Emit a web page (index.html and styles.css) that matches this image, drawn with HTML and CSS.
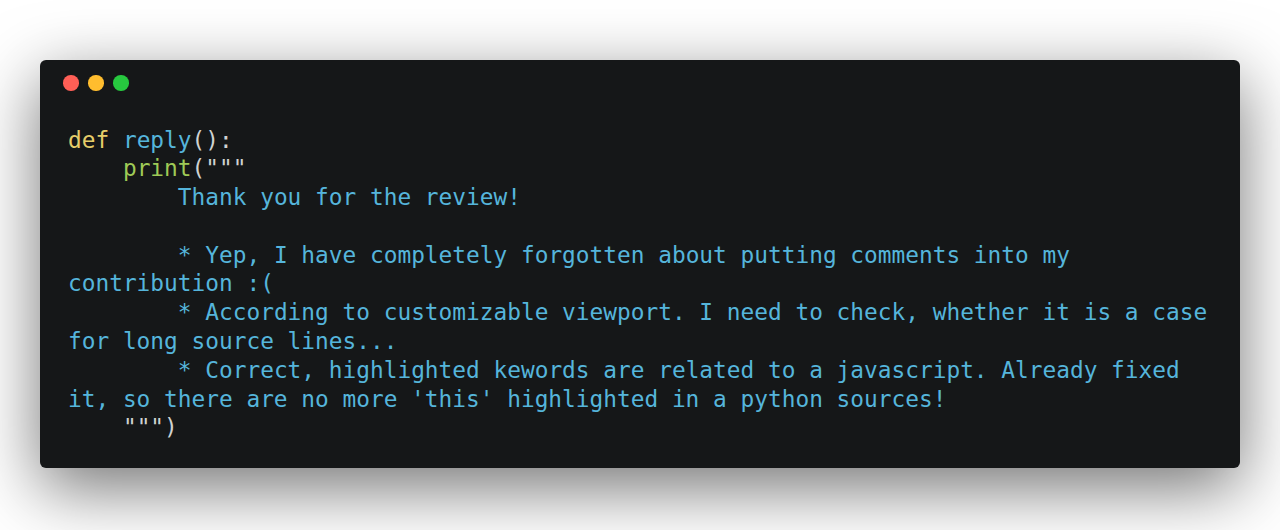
FILE: index.html
```html
<!DOCTYPE html>
<html>
<head>
<meta charset="utf-8">
<link rel="stylesheet" href="styles.css">
</head>
<body>
<div class="stage">
  <div class="window">
    <div class="controls">
      <span class="dot red"></span>
      <span class="dot yellow"></span>
      <span class="dot green"></span>
    </div>
    <pre class="code"><span class="kw">def</span> <span class="fn">reply</span><span class="pn">():</span>
    <span class="bi">print</span><span class="pn">("""</span><span class="str">
        Thank you for the review!

        * Yep, I have completely forgotten about putting comments into my contribution :(
        * According to customizable viewport. I need to check, whether it is a case for long source lines...
        * Correct, highlighted kewords are related to a javascript. Already fixed it, so there are no more 'this' highlighted in a python sources!
    </span><span class="pn">""")</span></pre>
  </div>
</div>
</body>
</html>
```
FILE: styles.css
```css
html, body {
  margin: 0;
  padding: 0;
  background: #ffffff;
}
.stage {
  padding: 60px 40px 62px 40px;
}
.window {
  background: #151718;
  border-radius: 6px;
  box-shadow: 0 20px 68px rgba(0, 0, 0, 0.55);
  padding: 15px 28px 26px 23px;
}
.controls {
  display: flex;
  gap: 9.5px;
  height: 15.5px;
}
.dot {
  width: 15.5px;
  height: 15.5px;
  border-radius: 50%;
  display: block;
}
.red { background: #ff5f56; }
.yellow { background: #ffbd2e; }
.green { background: #27c93f; }
.code {
  margin: 35px 0 0 5px;
  font-family: "DejaVu Sans Mono", monospace;
  font-size: 22.8px;
  line-height: 28.8px;
  color: #cfd2d1;
  white-space: pre-wrap;
  word-wrap: break-word;
}
.kw { color: #e6cd69; }
.fn { color: #55b5db; }
.bi { color: #9fca56; }
.str { color: #55b5db; }
.pn { color: #cfd2d1; }
```
